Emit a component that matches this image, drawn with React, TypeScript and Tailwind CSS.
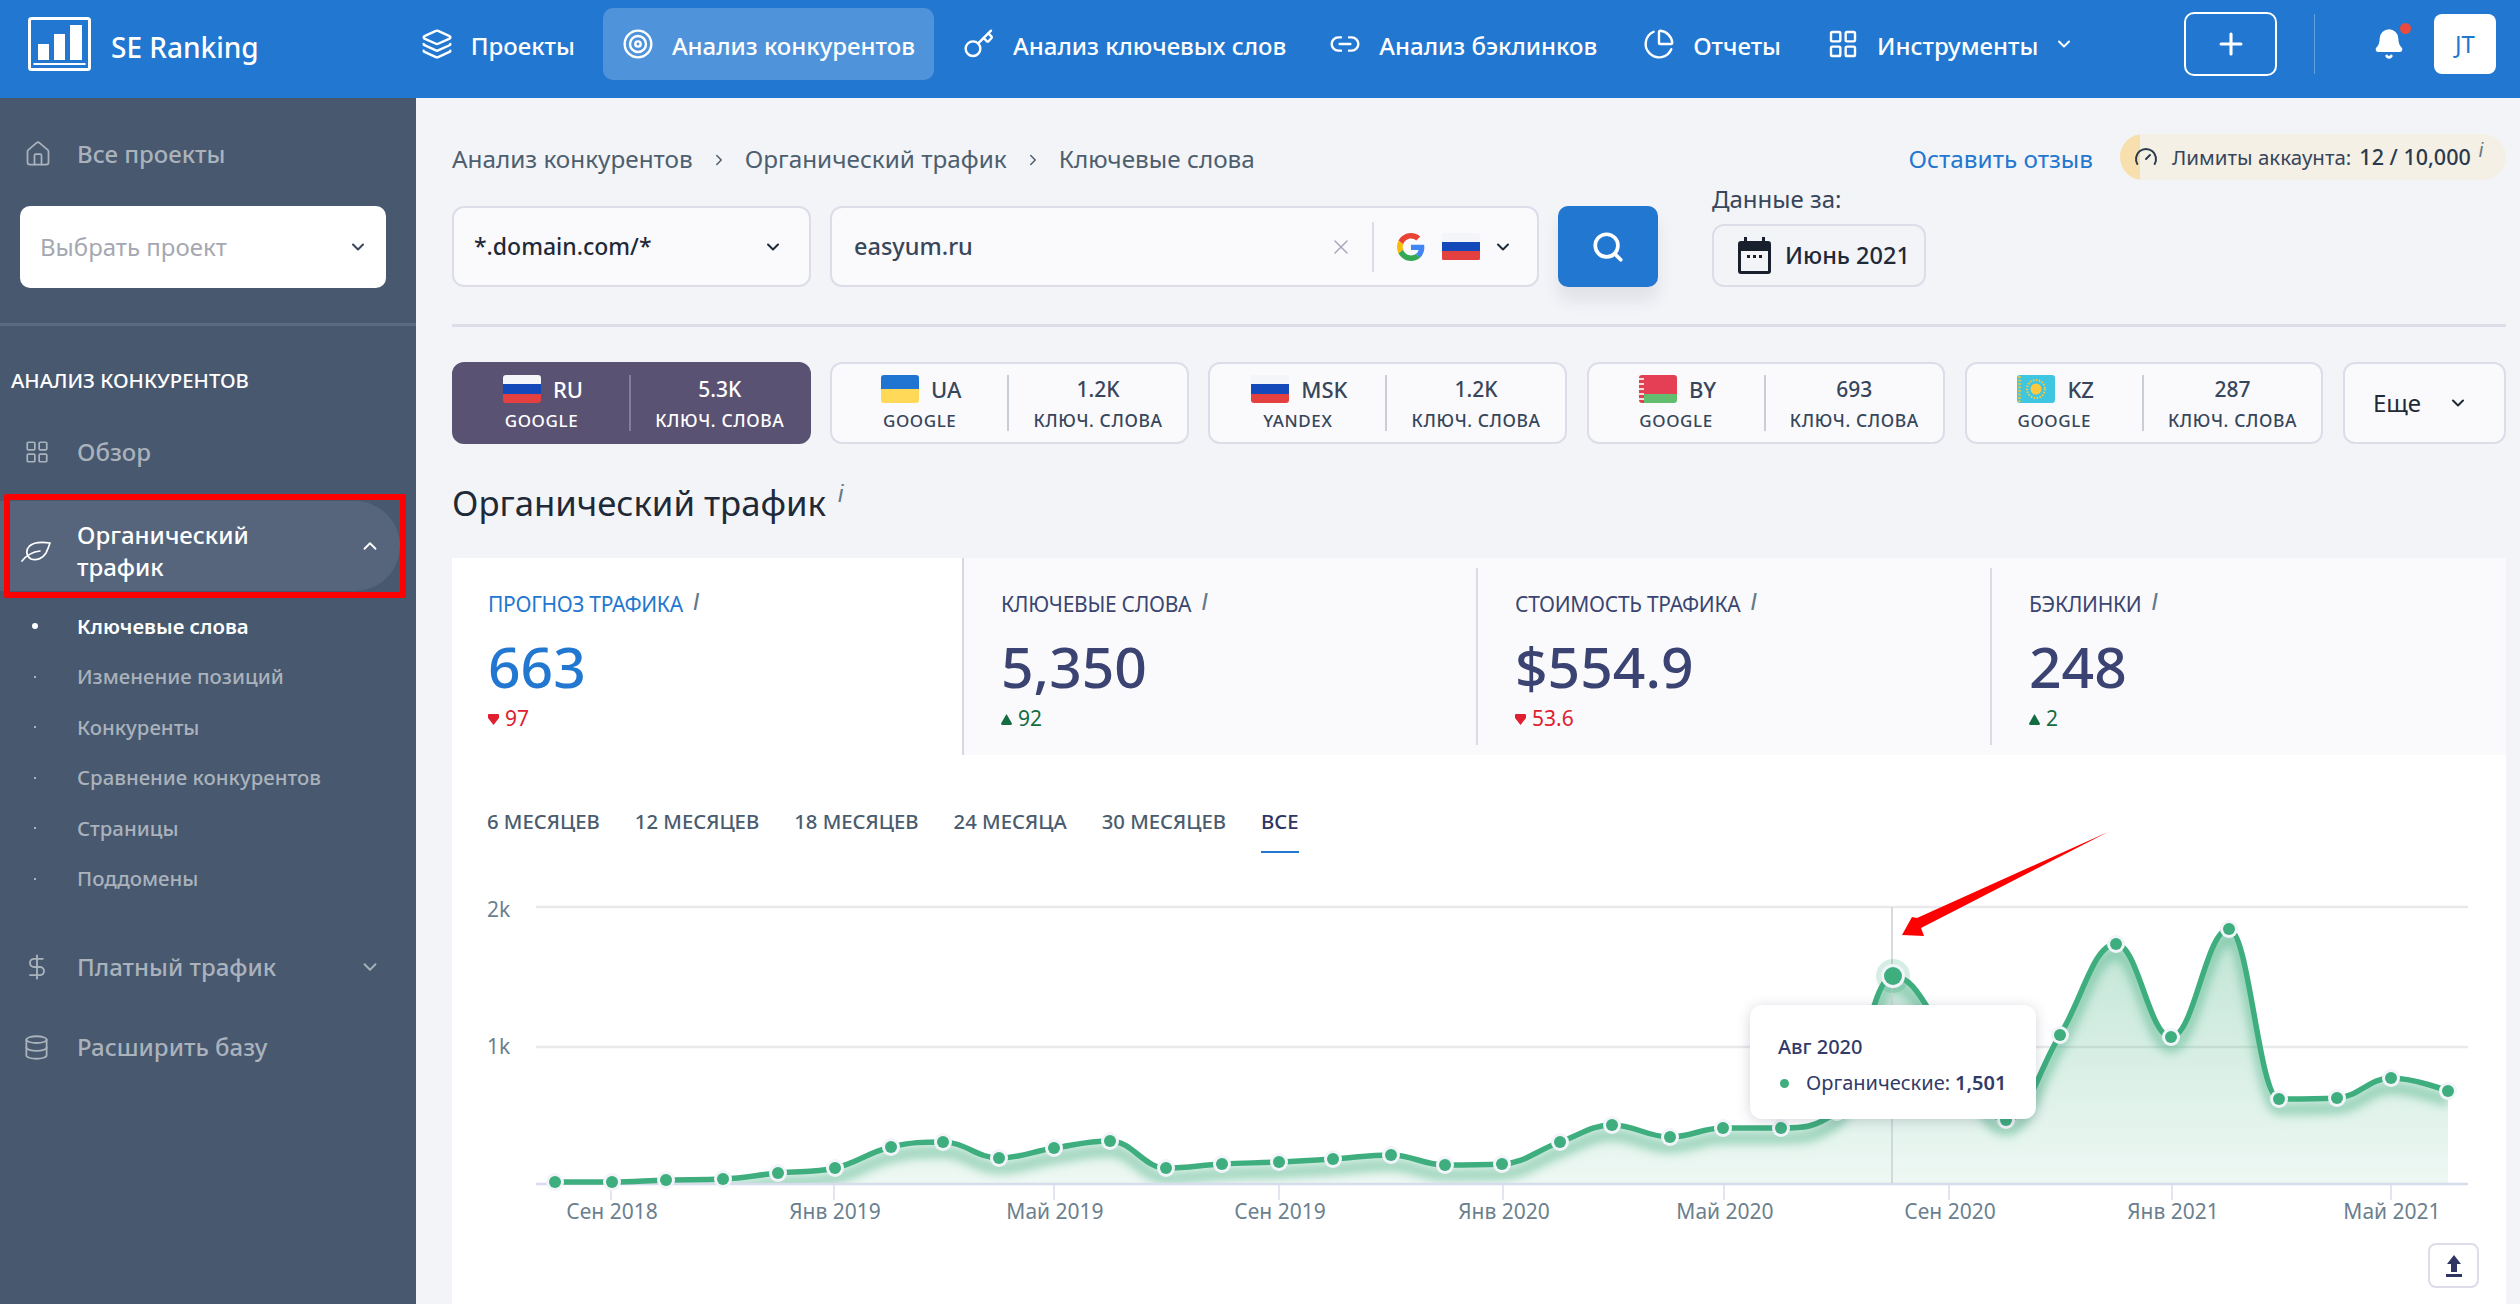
import { Bell, ChartPie, ChevronDown, ChevronRight, ChevronUp, Database, DollarSign, Gauge, House, Key, Layers, LayoutGrid, Link2, Plus, Search, Target, X } from "lucide-react"

const navItems = [
  { label: "Проекты", icon: Layers, ml: "ml-0" },
  { label: "Анализ конкурентов", icon: Target, active: true, ml: "ml-[28px]" },
  { label: "Анализ ключевых слов", icon: Key, ml: "ml-[29px]" },
  { label: "Анализ бэклинков", icon: Link2, ml: "ml-[43px]" },
  { label: "Отчеты", icon: ChartPie, ml: "ml-[46px]" },
  { label: "Инструменты", icon: LayoutGrid, ml: "ml-[46px]" },
]

const subItems = ["Ключевые слова", "Изменение позиций", "Конкуренты", "Сравнение конкурентов", "Страницы", "Поддомены"]

const periods = ["6 месяцев", "12 месяцев", "18 месяцев", "24 месяца", "30 месяцев"]

const points: [number, number][] = [
  [555, 1182], [612, 1182], [666, 1180], [723, 1179], [778, 1173], [835, 1168], [891, 1147], [943, 1142], [999, 1158],
  [1054, 1148], [1110, 1141], [1166, 1168], [1222, 1164], [1279, 1162], [1333, 1159], [1391, 1155], [1445, 1165],
  [1502, 1164], [1560, 1142], [1612, 1125], [1670, 1137], [1723, 1128], [1781, 1128], [1837, 1112], [1893, 976],
  [1949, 1040], [2006, 1120], [2060, 1035], [2116, 944], [2171, 1037], [2229, 929], [2279, 1099], [2337, 1098],
  [2391, 1078], [2448, 1091],
]

const xTicks = [
  { x: 611, label: "Сен 2018" }, { x: 834, label: "Янв 2019" }, { x: 1054, label: "Май 2019" }, { x: 1279, label: "Сен 2019" },
  { x: 1503, label: "Янв 2020" }, { x: 1724, label: "Май 2020" }, { x: 1949, label: "Сен 2020" }, { x: 2172, label: "Янв 2021" },
  { x: 2391, label: "Май 2021" },
]

// same smoothing as a highcharts spline
function splinePath(pts: [number, number][]) {
  const ctrl = pts.map(([x, y], i) => {
    if (i === 0 || i === pts.length - 1) return null
    const [px, py] = pts[i - 1]
    const [nx, ny] = pts[i + 1]
    const lx = (1.5 * x + px) / 2.5
    const rx = (1.5 * x + nx) / 2.5
    let ly = (1.5 * y + py) / 2.5
    let ry = (1.5 * y + ny) / 2.5
    const c = ((ry - ly) * (rx - x)) / (rx - lx) + y - ry
    ly += c
    ry += c
    if (ly > Math.max(py, y)) {
      ly = Math.max(py, y)
      ry = 2 * y - ly
    } else if (ly < Math.min(py, y)) {
      ly = Math.min(py, y)
      ry = 2 * y - ly
    }
    if (ry > Math.max(ny, y)) {
      ry = Math.max(ny, y)
      ly = 2 * y - ry
    } else if (ry < Math.min(ny, y)) {
      ry = Math.min(ny, y)
      ly = 2 * y - ry
    }
    return { lx, ly, rx, ry }
  })
  let d = `M${pts[0][0]} ${pts[0][1]}`
  for (let i = 1; i < pts.length; i++) {
    const a = ctrl[i - 1]
    const b = ctrl[i]
    const [px, py] = pts[i - 1]
    const [x, y] = pts[i]
    d += ` C${a ? a.rx : px} ${a ? a.ry : py} ${b ? b.lx : x} ${b ? b.ly : y} ${x} ${y}`
  }
  return d
}

function Logo() {
  return (
    <svg width="63" height="54" viewBox="0 0 63 54" fill="none" className="shrink-0">
      <rect x="1.5" y="1.5" width="60" height="51" rx="2" stroke="white" strokeWidth="3" />
      <rect x="5.5" y="46" width="52" height="2" fill="white" />
      <rect x="10" y="27" width="11" height="16" fill="white" />
      <rect x="26" y="17" width="11" height="26" fill="white" />
      <rect x="42" y="8" width="12" height="35" fill="white" />
    </svg>
  )
}

function LeafIcon() {
  return (
    <svg width="30" height="21" viewBox="0 0 30 21" fill="none" stroke="#fff" strokeWidth="1.7" strokeLinecap="round" strokeLinejoin="round" className="shrink-0">
      <path d="M29 2C22 1 13 1 8.500 5 4.500 9 5 15 10 18c6 2 12-1 15-6 2-4 3-7 4-10Z" />
      <path d="M1 20c4-5 9-9 18-10" />
    </svg>
  )
}

function GoogleG() {
  return (
    <svg width="28" height="28" viewBox="0 0 48 48">
      <path fill="#EA4335" d="M24 9.500c3.500 0 6.700 1.300 9.100 3.500l6.800-6.800C35.800 2.400 30.300 0 24 0 14.600 0 6.500 5.400 2.600 13.200l7.900 6.100C12.400 13.700 17.700 9.500 24 9.500z" />
      <path fill="#4285F4" d="M46.900 24.500c0-1.600-.1-3.100-.4-4.500H24v9h12.900c-.6 3-2.200 5.500-4.800 7.200l7.700 6c4.500-4.200 7.100-10.300 7.100-17.700z" />
      <path fill="#FBBC05" d="M10.500 28.700c-.5-1.500-.8-3-.8-4.700s.3-3.200.8-4.700l-7.900-6.100C.9 16.500 0 20.100 0 24s.9 7.500 2.600 10.800l7.900-6.100z" />
      <path fill="#34A853" d="M24 48c6.500 0 11.900-2.100 15.900-5.800l-7.700-6c-2.200 1.400-4.900 2.300-8.200 2.300-6.300 0-11.600-4.200-13.500-9.800l-7.900 6.100C6.500 42.600 14.600 48 24 48z" />
    </svg>
  )
}

function Flag({ code }: { code: string }) {
  if (code === "UA")
    return (
      <div className="flex h-[28px] w-[38px] flex-col overflow-hidden rounded-[3px]">
        <div className="flex-1 bg-[#1f75d1]" />
        <div className="flex-1 bg-[#ffd957]" />
      </div>
    )
  if (code === "BY")
    return (
      <div className="flex h-[28px] w-[38px] overflow-hidden rounded-[3px]">
        <div className="w-[5px] bg-[repeating-linear-gradient(0deg,#e2404f_0px,#e2404f_3px,#f7dcdc_3px,#f7dcdc_5px)]" />
        <div className="flex flex-1 flex-col">
          <div className="h-[19px] bg-[#e53f55]" />
          <div className="flex-1 bg-[#63bd6f]" />
        </div>
      </div>
    )
  if (code === "KZ")
    return (
      <div className="flex h-[28px] w-[38px] items-center justify-center overflow-hidden rounded-[3px] bg-[#3fc6e0]">
        <svg width="38" height="28" viewBox="0 0 38 28">
          <path d="M2.500 1v26" stroke="#e8c33a" strokeWidth="2.500" strokeDasharray="2 1.500" />
          <circle cx="19" cy="14" r="5.500" fill="#ffc93f" />
          <circle cx="19" cy="14" r="9" fill="none" stroke="#ffc93f" strokeWidth="2" strokeDasharray="1.500 1.500" />
        </svg>
      </div>
    )
  return (
    <div className="flex h-[28px] w-[38px] flex-col overflow-hidden rounded-[3px]">
      <div className="flex-1 bg-[#f4f5f8]" />
      <div className="flex-1 bg-[#1349b8]" />
      <div className="flex-1 bg-[#e54040]" />
    </div>
  )
}

function Info({ className }: { className?: string }) {
  return <span className={`font-['Liberation_Sans',sans-serif] italic text-[#64798a] ${className ?? ""}`}>i</span>
}

function Delta({ up }: { up?: boolean }) {
  return (
    <svg width="11" height="11" viewBox="0 0 11 11" fill="currentColor">
      {up ? <path d="M5.500 0 11 9.500Q11 11 9.500 11h-8Q0 11 0 9.500Z" /> : <path d="M1 0h9q1 0 1 1v3L5.500 11 0 4V1q0-1 1-1Z" />}
    </svg>
  )
}

function RegionCard({ code, engine, value, active }: { code: string; engine: string; value: string; active?: boolean }) {
  return (
    <div
      className={`flex h-[82px] w-[358.500px] items-center rounded-[12px] border-2 ${
        active ? "border-[#5a5273] bg-[#5a5273] text-white" : "border-[#dcdde8] bg-[#fafafd] text-[#37465a]"
      }`}
    >
      <div className="flex h-[56px] w-[177px] flex-col items-center justify-between border-r-2 border-current/25">
        <div className="ml-[3px] flex items-center gap-[12px]">
          <Flag code={code} />
          <span className="text-[22px] font-medium leading-[28px]">{code}</span>
        </div>
        <span className="text-[17px] font-medium leading-[20px] tracking-[0.6px]">{engine}</span>
      </div>
      <div className="flex h-[56px] flex-1 flex-col items-center justify-between">
        <span className="text-[21px] font-medium leading-[28px]">{value}</span>
        <span className="text-[17.500px] font-medium leading-[22px] tracking-[0.6px]">КЛЮЧ. СЛОВА</span>
      </div>
    </div>
  )
}

function StatText({ label, value, delta, up, active }: { label: string; value: string; delta: string; up?: boolean; active?: boolean }) {
  return (
    <>
      <div className={`flex h-[30px] items-center text-[21px] uppercase tracking-[-0.3px] ${active ? "text-[#2277d0]" : "text-[#3a4671]"}`}>
        {label}
        <Info className="ml-[10px] -mt-[6px] text-[24px]" />
      </div>
      <div className={`mt-[16px] text-[57px] font-medium leading-[60px] ${active ? "text-[#2277d0]" : "text-[#3a4371]"}`}>{value}</div>
      <div className={`mt-[8px] flex h-[30px] items-center gap-[6px] text-[21px] ${up ? "text-[#146c43]" : "text-[#e0202f]"}`}>
        <Delta up={up} />
        {delta}
      </div>
    </>
  )
}

function Chart() {
  const line = splinePath(points)
  const area = `${line} L2448 1183 L555 1183 Z`
  return (
    <div className="relative mt-[17px] h-[360px] w-[2054px]">
      <svg width="2054" height="360" viewBox="452 870 2054 360" className="block overflow-visible">
        <defs>
          <linearGradient id="areaFill" x1="0" y1="929" x2="0" y2="1183" gradientUnits="userSpaceOnUse">
            <stop offset="0" stopColor="#3fae7f" stopOpacity="0.32" />
            <stop offset="1" stopColor="#3fae7f" stopOpacity="0.09" />
          </linearGradient>
          <filter id="soft" x="-5%" y="-20%" width="110%" height="140%">
            <feGaussianBlur stdDeviation="5" />
          </filter>
          <clipPath id="areaClip">
            <path d={area} />
          </clipPath>
        </defs>
        <line x1="536" x2="2468" y1="907" y2="907" stroke="#e9e9ec" strokeWidth="2.500" />
        <line x1="536" x2="2468" y1="1047" y2="1047" stroke="#e9e9ec" strokeWidth="2.500" />
        <path d={area} fill="url(#areaFill)" />
        <g clipPath="url(#areaClip)">
          <path d={line} fill="none" stroke="#3fae7f" strokeOpacity="0.45" strokeWidth="12" filter="url(#soft)" transform="translate(0 10)" />
        </g>
        <line x1="536" x2="2468" y1="1184" y2="1184" stroke="#d7dcec" strokeWidth="2.500" />
        <line x1="1892" x2="1892" y1="907" y2="1183" stroke="#c9cfd3" strokeWidth="1.500" />
        {xTicks.map((t) => (
          <g key={t.x}>
            <line x1={t.x} x2={t.x} y1="1185" y2="1200" stroke="#d7dcec" strokeWidth="1.500" />
            <text x={t.x + 1} y="1219" textAnchor="middle" fontSize="21" fill="#6b7f8e">
              {t.label}
            </text>
          </g>
        ))}
        <text x="487" y="917" fontSize="21" fill="#6b7f8e">2k</text>
        <text x="487" y="1054" fontSize="21" fill="#6b7f8e">1k</text>
        <path d={line} fill="none" stroke="#3fae7f" strokeWidth="5.500" />
        {points.map(([x, y]) => (
          <g key={x}>
            <circle cx={x} cy={y} r="9" fill="#f1f4f8" />
            <circle cx={x} cy={y} r="6" fill="#3fae7f" />
          </g>
        ))}
        <circle cx="1893" cy="976" r="17" fill="#3fae7f" fillOpacity="0.22" />
        <circle cx="1893" cy="976" r="12" fill="#f1f4f8" />
        <circle cx="1893" cy="976" r="9" fill="#3fae7f" />
        <path d="M2108 832 L1917 918 L1912 917 L1902 935 L1924 936 L1921 928 Z" fill="#f00" />
      </svg>
      <div className="absolute left-[1298px] top-[135px] h-[114px] w-[286px] rounded-[12px] bg-white pl-[28px] pt-[28px] text-[#323a68] shadow-[0_2px_14px_rgba(40,50,80,0.2)]">
        <div className="text-[20px] font-medium leading-[28px]">Авг 2020</div>
        <div className="mt-[8px] flex items-center text-[20px] leading-[28px]">
          <span className="ml-[2px] mr-[17px] h-[9px] w-[9px] rounded-full bg-[#3fae7f]" />
          Органические:<span className="ml-[5px] font-semibold">1,501</span>
        </div>
      </div>
    </div>
  )
}

export default function App() {
  return (
    <div className="flex h-[1304px] w-[2520px] flex-col overflow-hidden bg-[#f3f4f8] font-['Noto_Sans',sans-serif]">
      <header className="flex h-[98px] shrink-0 items-center bg-[#2277d0] pb-[10px] pl-[28px] pr-[24px] text-white">
        <Logo />
        <span className="ml-[20px] mt-[6px] whitespace-nowrap text-[28px] font-medium">SE Ranking</span>
        <nav className="ml-[162px] flex items-center">
          {navItems.map((item) => (
            <div
              key={item.label}
              className={`flex h-[72px] items-center gap-[18px] rounded-[10px] text-[24px] font-medium ${item.ml} ${
                item.active ? "bg-[#4f94da] px-[19px]" : ""
              }`}
            >
              <item.icon size={32} strokeWidth={1.8} />
              <span className="mt-[4px] whitespace-nowrap">{item.label}</span>
            </div>
          ))}
          <ChevronDown size={20} strokeWidth={2.4} className="ml-[16px]" />
        </nav>
        <button className="ml-auto flex h-[64px] w-[93px] items-center justify-center rounded-[10px] border-2 border-white">
          <Plus size={34} strokeWidth={2.2} />
        </button>
        <div className="ml-[37px] h-[60px] w-[1px] bg-white/30" />
        <div className="relative ml-[58px]">
          <Bell size={32} fill="white" />
          <span className="absolute -right-[6px] -top-[5px] h-[11px] w-[11px] rounded-full bg-[#ea4b3c]" />
        </div>
        <div className="ml-[29px] flex h-[60px] w-[62px] items-center justify-center rounded-[8px] bg-white text-[24px] text-[#2277d0]">JT</div>
      </header>

      <div className="flex min-h-0 flex-1">
        <aside className="w-[416px] shrink-0 bg-[#47586f] pt-[31px] text-[#aab2bc]">
          <div className="flex h-[50px] items-center pl-[24px] text-[24px] font-medium">
            <House size={28} strokeWidth={1.5} />
            <span className="ml-[25px]">Все проекты</span>
          </div>
          <div className="mx-[20px] mt-[27px] flex h-[82px] w-[366px] items-center justify-between rounded-[10px] bg-white pl-[20px] pr-[18px] text-[24px] text-[#a5a8b0]">
            Выбрать проект
            <ChevronDown size={20} strokeWidth={2.4} className="text-[#37465a]" />
          </div>
          <div className="mt-[35px] h-[3px] bg-[#5d6b82]" />
          <div className="mt-[39px] pl-[11px] text-[20.400px] font-medium leading-[30px] text-white">АНАЛИЗ КОНКУРЕНТОВ</div>
          <div className="mt-[32px] flex h-[50px] items-center pl-[24px] text-[24px] font-medium">
            <LayoutGrid size={26} strokeWidth={1.6} />
            <span className="ml-[27px]">Обзор</span>
          </div>
          <div className="relative mt-[24px] flex h-[90px] w-[400px] items-center rounded-r-[45px] bg-[#56657c] pl-[21px] pr-[19px] pt-[10px] text-[24px] font-medium leading-[32px] text-white">
            <LeafIcon />
            <span className="ml-[26px] w-[240px]">Органический трафик</span>
            <ChevronUp size={22} className="ml-auto -mt-[10px]" />
            <div className="absolute -bottom-[7px] -top-[7px] left-[4px] -right-[6px] rounded-[2px] border-[6px] border-[#f00]" />
          </div>
          <div className="mt-[10px]">
            {subItems.map((s, i) => (
              <div key={s} className={`flex h-[50.500px] items-center text-[20.400px] ${i === 0 ? "font-semibold text-white" : "font-medium"}`}>
                <span className="flex w-[77px] justify-center pr-[7px]">
                  <span className={i === 0 ? "h-[6px] w-[6px] rounded-full bg-white" : "h-[2px] w-[2px] bg-[#aab2bc]"} />
                </span>
                {s}
              </div>
            ))}
          </div>
          <div className="mt-[38px] flex h-[50px] items-center pl-[23px] pr-[35px] text-[24px] font-medium">
            <DollarSign size={28} strokeWidth={1.6} />
            <span className="ml-[26px]">Платный трафик</span>
            <ChevronDown size={22} className="ml-auto" />
          </div>
          <div className="mt-[30px] flex h-[50px] items-center pl-[23px] text-[24px] font-medium">
            <Database size={27} strokeWidth={1.6} />
            <span className="ml-[27px]">Расширить базу</span>
          </div>
        </aside>

        <main className="flex min-w-0 flex-1 flex-col pl-[36px] pr-[14px] pt-[36px]">
          <div className="flex h-[46px] items-center text-[24.300px] text-[#4d5f6f]">
            <div className="mt-[5px] flex items-center gap-[17px]">
              Анализ конкурентов
              <ChevronRight size={18} />
              Органический трафик
              <ChevronRight size={18} />
              Ключевые слова
            </div>
            <span className="ml-auto mt-[5px] text-[#2277d0]">Оставить отзыв</span>
            <div className="relative ml-[27px] flex h-[46px] w-[386px] items-center overflow-hidden rounded-[23px] bg-[#f4f0e6] pl-[14px] text-[20.500px] text-[#37465a]">
              <div className="absolute bottom-0 left-0 top-0 w-[20px] bg-[#f7e0ae]" />
              <Gauge size={24} className="relative text-[#2b3a4d]" />
              <span className="ml-[14px]">Лимиты аккаунта:</span>
              <span className="ml-[8px] text-[21.500px] font-medium text-[#2b3a4d]">12 / 10,000</span>
              <Info className="ml-[8px] -mt-[14px] text-[20px]" />
            </div>
          </div>

          <div className="mt-[26px] flex h-[81px] items-stretch">
            <div className="flex w-[359px] items-center justify-between rounded-[12px] border-2 border-[#dcdde8] bg-[#fafafd] pl-[20px] pr-[26px] text-[23px] font-medium text-[#1e2a38]">
              *.domain.com/*
              <ChevronDown size={20} strokeWidth={2.4} />
            </div>
            <div className="ml-[19px] flex w-[709px] items-center rounded-[12px] border-2 border-[#dcdde8] bg-[#fafafd] pl-[22px] pr-[24px] text-[23.500px] font-medium text-[#37465a]">
              easyum.ru
              <X size={24} strokeWidth={1.5} className="ml-auto text-[#a9a9bb]" />
              <div className="ml-[19px] h-[50px] w-[2px] bg-[#dcdde8]" />
              <span className="ml-[23px]">
                <GoogleG />
              </span>
              <span className="ml-[17px]">
                <Flag code="RU" />
              </span>
              <ChevronDown size={20} strokeWidth={2.4} className="ml-[13px] text-[#1e2a38]" />
            </div>
            <button className="ml-[19px] flex w-[100px] items-center justify-center rounded-[10px] bg-[#2277d0] text-white shadow-[0_14px_16px_rgba(40,50,80,0.09)]">
              <Search size={34} strokeWidth={2.6} />
            </button>
            <div className="ml-[54px] flex flex-col justify-end">
              <span className="mb-[10px] shrink-0 text-[24px] leading-[30px] text-[#37465a]">Данные за:</span>
              <div className="flex h-[63px] w-[214px] shrink-0 items-center rounded-[12px] border-2 border-[#dcdde8] pl-[24px] text-[23.500px] font-medium text-[#1e2a38]">
                <svg width="33" height="37" viewBox="0 0 33 37" fill="#17202c" className="shrink-0">
                  <rect x="6" y="0" width="3" height="6" />
                  <rect x="24" y="0" width="3" height="6" />
                  <path d="M3 4h27a3 3 0 0 1 3 3v27a3 3 0 0 1-3 3H3a3 3 0 0 1-3-3V7a3 3 0 0 1 3-3Zm0 10v20h27V14H3Z" />
                  <rect x="9" y="18" width="3" height="3" />
                  <rect x="15" y="18" width="3" height="3" />
                  <rect x="21" y="18" width="3" height="3" />
                </svg>
                <span className="ml-[14px] whitespace-nowrap">Июнь 2021</span>
              </div>
            </div>
          </div>

          <div className="mt-[37px] h-[3px] shrink-0 bg-[#dcdde8]" />

          <div className="mt-[35px] flex gap-[19.700px]">
            <RegionCard code="RU" engine="GOOGLE" value="5.3K" active />
            <RegionCard code="UA" engine="GOOGLE" value="1.2K" />
            <RegionCard code="MSK" engine="YANDEX" value="1.2K" />
            <RegionCard code="BY" engine="GOOGLE" value="693" />
            <RegionCard code="KZ" engine="GOOGLE" value="287" />
            <div className="flex h-[82px] flex-1 items-center justify-between rounded-[12px] border-2 border-[#dcdde8] bg-[#fafafd] pl-[28px] pr-[36px] text-[24px] text-[#1e2a38]">
              Еще
              <ChevronDown size={20} strokeWidth={2.4} />
            </div>
          </div>

          <div className="mt-[34px] flex h-[50px] items-center text-[34.700px] leading-[50px] text-[#1e2a38]">
            Органический трафик
            <Info className="ml-[12px] -mt-[18px] text-[24px]" />
          </div>

          <div className="mt-[30px] flex h-[197px] shrink-0 bg-[#fafafd]">
            <div className="w-[512px] border-r-2 border-[#d6d9e2] bg-white pl-[36px] pt-[32px]">
              <StatText label="Прогноз трафика" value="663" delta="97" active />
            </div>
            <div className="w-[514px] py-[10px]">
              <div className="h-full border-r-2 border-[#dadce4] pl-[37px] pt-[22px]">
                <StatText label="Ключевые слова" value="5,350" delta="92" up />
              </div>
            </div>
            <div className="w-[514px] py-[10px]">
              <div className="h-full border-r-2 border-[#dadce4] pl-[37px] pt-[22px]">
                <StatText label="Стоимость трафика" value="$554.9" delta="53.6" />
              </div>
            </div>
            <div className="flex-1 py-[10px]">
              <div className="h-full pl-[37px] pt-[22px]">
                <StatText label="Бэклинки" value="248" delta="2" up />
              </div>
            </div>
          </div>

          <section className="flex-1 bg-white pt-[51px]">
            <div className="flex gap-[35px] pl-[35px] text-[20.300px] font-medium uppercase leading-[30px] text-[#4a5c6e]">
              {periods.map((p) => (
                <span key={p}>{p}</span>
              ))}
              <span className="border-b-2 border-[#2277d0] pb-[15px] text-[#2f3562]">Все</span>
            </div>
            <Chart />
            <div className="mt-[13px] flex justify-end pr-[27px]">
              <div className="flex h-[45px] w-[51px] items-center justify-center rounded-[8px] border-2 border-[#dcdde8]">
                <svg width="18" height="22" viewBox="0 0 18 22" fill="#2f3562">
                  <path d="M9 0 16 9H12V17H6V9H2Z" />
                  <rect x="1" y="19" width="16" height="3" />
                </svg>
              </div>
            </div>
          </section>
        </main>
      </div>
    </div>
  )
}
